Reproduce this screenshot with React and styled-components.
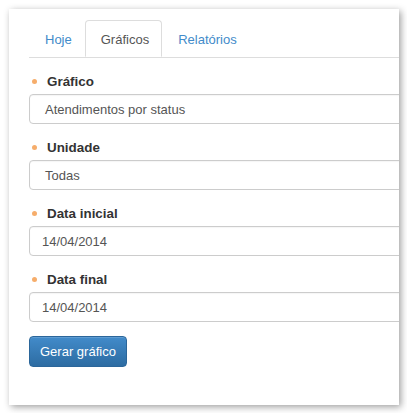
import React from "react";
import styled, { createGlobalStyle } from "styled-components";

const GlobalStyle = createGlobalStyle`
  html, body {
    margin: 0;
    padding: 0;
    background: #fff;
    font-family: "Liberation Sans", Arial, sans-serif;
  }
`;

const Panel = styled.div`
  margin: 9px;
  width: 390px;
  height: 396px;
  background: #fff;
  box-shadow: 2px 2px 7px rgba(0, 0, 0, 0.38);
  overflow: hidden;
  padding-top: 11px;
  box-sizing: border-box;
`;

const Tabs = styled.ul`
  display: flex;
  list-style: none;
  margin: 0 0 0 20px;
  padding: 0;
  height: 37px;
  border-bottom: 1px solid #ddd;
`;

const Tab = styled.li`
  display: flex;
  align-items: center;
  padding: 1px 12px 0 15px;
  margin-bottom: -1px;
  height: 37px;
  box-sizing: border-box;
  font-size: 13px;
  color: ${(p) => (p.active ? "#555" : "#428bca")};
  background: #fff;
  border: 1px solid ${(p) => (p.active ? "#ddd" : "transparent")};
  border-bottom-color: ${(p) => (p.active ? "#fff" : "transparent")};
  border-radius: 4px 4px 0 0;
`;

const Form = styled.div`
  padding: 13px 0 0 20px;
  display: flex;
  flex-direction: column;
`;

const Group = styled.div`
  display: flex;
  flex-direction: column;
  margin-bottom: 13px;
`;

const Label = styled.div`
  display: flex;
  align-items: center;
  height: 20px;
  margin-bottom: 3px;
  font-size: 13.4px;
  font-weight: bold;
  color: #333;

  &::before {
    content: "";
    width: 5px;
    height: 5px;
    border-radius: 50%;
    background: #f6ad6b;
    margin: 0 10px 0 3px;
  }
`;

const Field = styled.div`
  width: 420px;
  height: 30px;
  box-sizing: border-box;
  border: 1px solid #ccc;
  border-radius: 4px;
  display: flex;
  align-items: center;
  padding-left: ${(p) => (p.select ? "15px" : "12px")};
  font-size: 13px;
  color: #555;
  box-shadow: inset 0 1px 1px rgba(0, 0, 0, 0.04);
`;

const Button = styled.button`
  align-self: flex-start;
  margin-top: 1px;
  height: 31px;
  padding: 0 10px;
  font-family: "Liberation Sans", Arial, sans-serif;
  font-size: 13px;
  color: #fff;
  border: 1px solid #2b669a;
  border-radius: 4px;
  background: linear-gradient(to bottom, #428bca 0%, #2d6ca2 100%);
  box-shadow: inset 0 1px 0 rgba(255, 255, 255, 0.15);
`;

const fields = [
  { label: "Gráfico", value: "Atendimentos por status", select: true },
  { label: "Unidade", value: "Todas", select: true },
  { label: "Data inicial", value: "14/04/2014" },
  { label: "Data final", value: "14/04/2014" },
];

export default function App() {
  return (
    <>
      <GlobalStyle />
      <Panel>
        <Tabs>
          <Tab>Hoje</Tab>
          <Tab active>Gráficos</Tab>
          <Tab>Relatórios</Tab>
        </Tabs>
        <Form>
          {fields.map((f) => (
            <Group key={f.label}>
              <Label>{f.label}</Label>
              <Field select={f.select}>{f.value}</Field>
            </Group>
          ))}
          <Button>Gerar gráfico</Button>
        </Form>
      </Panel>
    </>
  );
}
